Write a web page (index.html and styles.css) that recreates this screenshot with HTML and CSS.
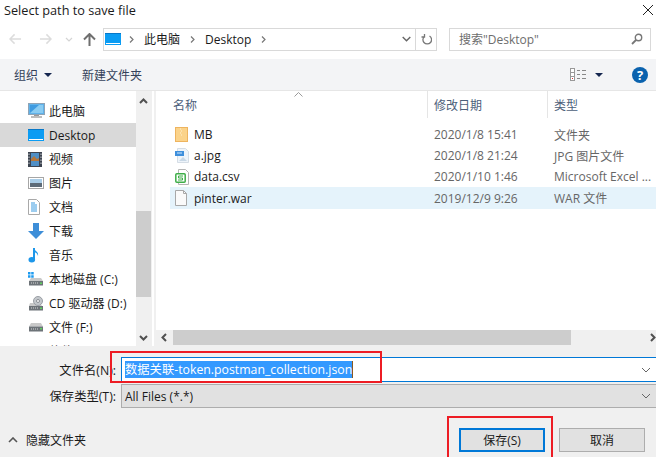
FILE: index.html
```html
<!DOCTYPE html>
<html lang="zh-CN">
<head>
    <meta charset="UTF-8" />
    <title>Select path to save file</title>
    <link rel="stylesheet" href="styles.css">
</head>
<body>
<div class="dialog">
    <div class="title-bar">
        <span>Select path to save file</span>
        <svg class="close" width="12" height="12" viewBox="0 0 12 12"><path d="M1 1l10 10M11 1L1 11" stroke="#222" fill="none"/></svg>
    </div>

    <div class="nav-row">
        <svg class="nav-icon back" width="13" height="12" viewBox="0 0 14 12"><path d="M6 1L1 6l5 5M1 6h12" stroke="#dcdcdc" stroke-width="1.6" fill="none"/></svg>
        <svg class="nav-icon forward" width="13" height="12" viewBox="0 0 14 12"><path d="M8 1l5 5-5 5M13 6H1" stroke="#dcdcdc" stroke-width="1.6" fill="none"/></svg>
        <svg class="nav-icon recent" width="8" height="5" viewBox="0 0 8 5"><path d="M1 1l3 3 3-3" stroke="#d4d4d4" stroke-width="1.2" fill="none"/></svg>
        <svg class="nav-icon up" width="13" height="13" viewBox="0 0 13 13"><path d="M1 6.500l5.500-5.500 5.500 5.500M6.500 1.500V13" stroke="#6f6f6f" stroke-width="2" fill="none"/></svg>
        <div class="address">
            <svg class="pc-icon" width="16" height="12" viewBox="0 0 16 12"><rect width="16" height="12" fill="#0b9cf3"/><path d="M1 10.500h14" stroke="#fff"/><rect x="0" y="0" width="16" height="1" fill="#0878c8"/></svg>
            <svg class="crumb" width="5" height="7" viewBox="0 0 5 7"><path d="M1 .5l3 3-3 3" stroke="#777" stroke-width="1.200" fill="none"/></svg>
            <span>此电脑</span>
            <svg class="crumb" width="5" height="7" viewBox="0 0 5 7"><path d="M1 .5l3 3-3 3" stroke="#777" stroke-width="1.200" fill="none"/></svg>
            <span>Desktop</span>
            <svg class="crumb" width="5" height="7" viewBox="0 0 5 7"><path d="M1 .5l3 3-3 3" stroke="#777" stroke-width="1.200" fill="none"/></svg>
            <svg class="addr-drop" width="9" height="6" viewBox="0 0 9 6"><path d="M.7 1l3.800 3.800L8.300 1" stroke="#666" stroke-width="1.400" fill="none"/></svg>
            <div class="refresh">
                <svg width="11" height="12" viewBox="0 0 11 12"><path d="M3.500 2.500a4.300 4.300 0 1 0 4.500 0M3 .5v3h-3" transform="translate(.5 .5)" stroke="#777" stroke-width="1.300" fill="none"/></svg>
            </div>
        </div>
        <div class="search">
            <span>搜索"Desktop"</span>
            <svg width="12" height="12" viewBox="0 0 12 12"><circle cx="7.500" cy="4.500" r="3.200" stroke="#777" stroke-width="1.400" fill="none"/><path d="M5 7l-4 4" stroke="#777" stroke-width="1.800"/></svg>
        </div>
    </div>

    <div class="toolbar">
        <span>组织</span>
        <i class="caret organize-caret"></i>
        <span class="new-folder">新建文件夹</span>
        <svg class="view-icon" width="17" height="13" viewBox="0 0 17 13">
            <rect x=".5" y=".5" width="4" height="12" fill="#fff" stroke="#999"/>
            <path d="M1 4.500h3M1 8.500h3" stroke="#999"/>
            <rect x="2" y="10" width="1" height="1" fill="#d33"/>
            <path d="M7 2.500h3M12 2.500h4M7 6.500h3M12 6.500h4M7 10.500h3M12 10.500h4" stroke="#888"/>
        </svg>
        <i class="caret view-caret"></i>
        <div class="help">?</div>
    </div>

    <div class="main">
        <div class="sidebar">
            <div class="side-item">
                <svg width="17" height="16" viewBox="0 0 17 16"><rect x=".5" y=".5" width="16" height="11" fill="#5fb2ea" stroke="#8fa3b5"/><rect x="2" y="2" width="13" height="8" fill="#3f9be0"/><path d="M2 10l9-8h4v8z" fill="#8accf2"/><rect x="6" y="12" width="5" height="1" fill="#9a9a9a"/><rect x="3" y="13" width="11" height="2" fill="#bdbdbd"/></svg>
                <span>此电脑</span>
            </div>
            <div class="side-item active">
                <svg width="16" height="12" viewBox="0 0 16 12"><rect width="16" height="12" fill="#0b9cf3"/><path d="M1 10.500h14" stroke="#fff"/><rect width="16" height="1" fill="#0878c8"/></svg>
                <span>Desktop</span>
            </div>
            <div class="side-item">
                <svg width="14" height="15" viewBox="0 0 14 15"><rect width="14" height="15" fill="#3d4450"/><rect x="3" y="1" width="8" height="13" fill="#4f8fc6"/><path d="M3 7l3-3 3 3 2-1v3H3z" fill="#b5763a"/><path d="M1 1.500v12M13 1.500v12" stroke="#c9ccd0" stroke-dasharray="1.500 1.500"/></svg>
                <span>视频</span>
            </div>
            <div class="side-item">
                <svg width="16" height="12" viewBox="0 0 16 12"><rect x=".5" y=".5" width="15" height="11" fill="#fff" stroke="#a6a6a6"/><rect x="2" y="2" width="12" height="4" fill="#a9cde8"/><rect x="2" y="6" width="12" height="4" fill="#5d6b78"/></svg>
                <span>图片</span>
            </div>
            <div class="side-item">
                <svg width="12" height="16" viewBox="0 0 12 16"><path d="M.5.500h8l3 3v12H.5z" fill="#fff" stroke="#a9a9a9"/><path d="M3 4h4M3 6h6M3 8h6M3 10h6M3 12h6" stroke="#3a9be0"/></svg>
                <span>文档</span>
            </div>
            <div class="side-item">
                <svg width="16" height="16" viewBox="0 0 16 16"><path d="M5 0h6v8h5l-8 8-8-8h5z" fill="#3d8ed8"/></svg>
                <span>下载</span>
            </div>
            <div class="side-item">
                <svg width="12" height="16" viewBox="0 0 12 16"><path d="M6 1v11" stroke="#1d97ea" stroke-width="2"/><ellipse cx="3.800" cy="12.800" rx="3.300" ry="2.700" fill="#1d97ea"/><path d="M6 1c.5 3 5 3.500 4 8-.5-2.500-2-3.500-4-4z" fill="#1d97ea"/></svg>
                <span>音乐</span>
            </div>
            <div class="side-item">
                <svg width="16" height="14" viewBox="0 0 16 14"><path d="M0 0h2.500v2.500H0zM3.200 0h2.500v2.500H3.200zM0 3.200h2.500v2.500H0zM3.200 3.200h2.500v2.500H3.200z" fill="#1d9bf0"/><path d="M3 6h10l2 3H1z" fill="#c9c9c9"/><rect x="1" y="9" width="14" height="4.500" fill="#6d7378"/><path d="M3 11h7" stroke="#d6d6d6" stroke-dasharray="1 1"/><rect x="12" y="10.500" width="2" height="1.500" fill="#5fd35f"/></svg>
                <span>本地磁盘 (C:)</span>
            </div>
            <div class="side-item">
                <svg width="16" height="15" viewBox="0 0 16 15"><path d="M2 7h10l2 3H1z" fill="#c9c9c9"/><rect x="1" y="10" width="14" height="4.500" fill="#6d7378"/><path d="M3 12h7" stroke="#d6d6d6" stroke-dasharray="1 1"/><rect x="12" y="11.500" width="2" height="1.500" fill="#5fd35f"/><circle cx="10" cy="5" r="4.500" fill="#c4c8cc" stroke="#9a9fa5"/><circle cx="10" cy="5" r="1.500" fill="#fff" stroke="#8a8f95"/></svg>
                <span>CD 驱动器 (D:)</span>
            </div>
            <div class="side-item">
                <svg width="16" height="9" viewBox="0 0 16 9"><path d="M3 0h10l2 3.500H1z" fill="#c9c9c9"/><rect x="1" y="3.500" width="14" height="5" fill="#6d7378"/><path d="M3 6h7" stroke="#d6d6d6" stroke-dasharray="1 1"/><rect x="12" y="5" width="2" height="1.500" fill="#5fd35f"/></svg>
                <span>文件 (F:)</span>
            </div>
            <div class="side-item">
                <svg width="16" height="9" viewBox="0 0 16 9"><rect x="1" y="3.500" width="14" height="5" fill="#6d7378"/></svg>
                <span>软件 (G:)</span>
            </div>
        </div>
        <div class="vscroll">
            <svg class="arrow-top" width="9" height="6" viewBox="0 0 9 6"><path d="M1 5l3.500-3.500L8 5" stroke="#505050" stroke-width="2" fill="none"/></svg>
            <div class="vthumb"></div>
            <svg class="arrow-bottom" width="9" height="6" viewBox="0 0 9 6"><path d="M1 1l3.500 3.500L8 1" stroke="#505050" stroke-width="2" fill="none"/></svg>
        </div>
        <div class="list">
            <div class="list-head">
                <div class="col-name">名称</div>
                <div class="col-date">修改日期</div>
                <div class="col-type">类型</div>
                <svg class="sort" width="9" height="5" viewBox="0 0 9 5"><path d="M.5 4.500l4-4 4 4" stroke="#9a9a9a" fill="none"/></svg>
            </div>
            <div class="rows">
                <div class="row">
                    <div class="file-name">
                        <svg width="13" height="15" viewBox="0 0 13 15"><rect x=".5" y=".5" width="12" height="14" fill="#fbd38a" stroke="#eeb45f"/><path d="M5 2h1M6 4h1M5 6h1M6 8h1" stroke="#fff0d0"/></svg>
                        <span>MB</span>
                    </div>
                    <div class="file-date">2020/1/8 15:41</div>
                    <div class="file-type">文件夹</div>
                </div>
                <div class="row">
                    <div class="file-name">
                        <svg width="14" height="15" viewBox="0 0 14 15"><path d="M2.500.500h8l3 3v11h-11z" fill="#eef4fa" stroke="#d5dde5"/><rect x="0" y="3" width="9" height="5" fill="#3e8fdc"/><path d="M2 5h5" stroke="#cfe6fa"/><path d="M4 13l4-4 4 4z" fill="#c8d8e6"/></svg>
                        <span>a.jpg</span>
                    </div>
                    <div class="file-date">2020/1/8 21:24</div>
                    <div class="file-type">JPG 图片文件</div>
                </div>
                <div class="row">
                    <div class="file-name">
                        <svg width="14" height="16" viewBox="0 0 14 16"><path d="M3.500.500h7l3 3v12h-10z" fill="#fff" stroke="#b5b5b5"/><rect x=".8" y="4.800" width="9.400" height="8.400" rx="1" fill="#fff" stroke="#3fae49" stroke-width="1.500"/><path d="M8 7H3.500v2h4v2H3" stroke="#3fae49" fill="none"/></svg>
                        <span>data.csv</span>
                    </div>
                    <div class="file-date">2020/1/10 1:46</div>
                    <div class="file-type">Microsoft Excel ...</div>
                </div>
                <div class="row selected">
                    <div class="file-name">
                        <svg width="12" height="16" viewBox="0 0 12 16"><path d="M.5.500h8l3 3v12H.5z" fill="#fafafa" stroke="#a8a8a8"/><path d="M8.500.500v3h3" fill="none" stroke="#a8a8a8"/></svg>
                        <span>pinter.war</span>
                    </div>
                    <div class="file-date">2019/12/9 9:26</div>
                    <div class="file-type">WAR 文件</div>
                </div>
            </div>
            <div class="hscroll">
                <svg class="arrow-left" width="6" height="9" viewBox="0 0 6 9"><path d="M5 1L1.500 4.500 5 8" stroke="#505050" stroke-width="2" fill="none"/></svg>
                <div class="hthumb"></div>
                <svg class="arrow-right" width="6" height="9" viewBox="0 0 6 9"><path d="M1 1l3.500 3.500L1 8" stroke="#505050" stroke-width="2" fill="none"/></svg>
            </div>
        </div>
    </div>

    <div class="form">
        <div class="field filename-field">
            <label>文件名(N):</label>
            <div class="filename-box">
                <span class="selection">数据关联-token.postman_collection.json</span>
                <svg width="10" height="6" viewBox="0 0 10 6"><path d="M1 1l4 4 4-4" stroke="#666" fill="none"/></svg>
            </div>
        </div>
        <div class="field type-field">
            <label>保存类型(T):</label>
            <div class="type-box">
                <span>All Files (*.*)</span>
                <svg width="10" height="6" viewBox="0 0 10 6"><path d="M1 1l4 4 4-4" stroke="#666" fill="none"/></svg>
            </div>
        </div>
        <div class="actions">
            <svg class="hide-arrow" width="10" height="6" viewBox="0 0 10 6"><path d="M1 5l4-4 4 4" stroke="#555" stroke-width="1.600" fill="none"/></svg>
            <span class="hide-label">隐藏文件夹</span>
            <button class="btn primary">保存(S)</button>
            <button class="btn">取消</button>
        </div>
    </div>

    <div class="mark mark-filename"></div>
    <div class="mark mark-save"></div>
</div>
</body>
</html>
```

FILE: styles.css
```css
* {
    box-sizing: border-box;
}
html, body {
    margin: 0;
    height: 100%;
}
body {
    font-family: "Open Sans", "Noto Sans CJK SC", sans-serif;
    font-size: 12px;
    color: #1a1a1a;
    background: white;
    overflow: hidden;
}
svg {
    display: block;
    flex: none;
}
.dialog {
    position: relative;
    width: 656px;
    height: 457px;
    overflow: hidden;
}
.title-bar {
    height: 20px;
    padding: 0 2px 0 4px;
    display: flex;
    justify-content: space-between;
    align-items: center;
    font-size: 12.7px;
}
.nav-row {
    height: 39px;
    display: flex;
    align-items: center;
    padding: 0 5px 1px 9px;
}
.forward { margin-left: 17px; }
.recent { margin-left: 13px; }
.up { margin-left: 10px; }
.address {
    width: 334px;
    height: 23px;
    margin-left: 7px;
    border: 1px solid #d9d9d9;
    display: flex;
    align-items: center;
    padding-left: 1px;
}
.address .crumb { margin: 0 10px 0 8px; }
.address span + .crumb { margin-left: 10px; }
.addr-drop { margin-left: auto; margin-right: 4px; }
.refresh {
    width: 21px;
    height: 100%;
    border-left: 1px solid #d9d9d9;
    display: flex;
    align-items: center;
    justify-content: center;
}
.search {
    width: 202px;
    height: 23px;
    margin-left: 12px;
    border: 1px solid #d9d9d9;
    display: flex;
    align-items: center;
    justify-content: space-between;
    padding: 0 7px 0 9px;
    color: #6d6d6d;
}
.toolbar {
    height: 32px;
    background: #f3f4f6;
    border-bottom: 1px solid #e6e6e6;
    display: flex;
    align-items: center;
    padding: 0 8px 0 14px;
    color: #33415a;
}
.caret {
    display: block;
    width: 0;
    height: 0;
    border: 4px solid transparent;
    border-top: 4px solid #15264f;
    border-bottom: 0;
}
.organize-caret { margin-left: 6px; }
.new-folder { margin-left: 30px; }
.view-icon { margin-left: auto; }
.view-caret { margin-left: 8px; }
.help {
    width: 16px;
    height: 16px;
    margin-left: 29px;
    border-radius: 50%;
    background: #0a62ae;
    color: white;
    font-weight: bold;
    font-size: 13px;
    line-height: 16px;
    text-align: center;
}
.main {
    height: 255px;
    display: flex;
}
.sidebar {
    width: 136px;
    overflow: hidden;
    padding-top: 8px;
    flex: none;
}
.side-item {
    height: 24px;
    display: flex;
    align-items: center;
    position: relative;
}
.side-item svg {
    margin-left: 28px;
}
.side-item span {
    position: absolute;
    left: 49px;
    white-space: nowrap;
}
.side-item.active {
    background: #d9d9d9;
}
.vscroll {
    width: 16px;
    margin-right: 2px;
    background: #f0f0f0;
    position: relative;
    flex: none;
}
.arrow-top { position: absolute; left: 3px; top: 7px; }
.arrow-bottom { position: absolute; left: 3px; bottom: 5px; }
.vthumb {
    position: absolute;
    top: 120px;
    left: 0;
    width: 15px;
    height: 86px;
    background: #cdcdcd;
}
.list {
    flex: 1;
    min-width: 0;
    display: flex;
    flex-direction: column;
    border-left: 2px solid #f0f0f0;
}
.list-head {
    height: 27px;
    display: grid;
    grid-template-columns: 271px 120px 1fr;
    color: #4c607a;
    position: relative;
}
.list-head div {
    display: flex;
    align-items: center;
    padding-left: 6px;
}
.col-name { padding-left: 17px !important; }
.col-date, .col-type { border-left: 1px solid #e5e5e5; }
.sort { position: absolute; left: 138px; top: 1px; }
.rows {
    flex: 1;
    padding: 6px 0 0 14px;
}
.row {
    height: 21px;
    display: grid;
    grid-template-columns: 257px 120px 1fr;
    align-items: center;
    color: #666;
}
.row.selected {
    height: 22px;
    background: #e5f3fb;
}
.file-name {
    display: flex;
    align-items: center;
    padding-left: 5px;
    color: #1a1a1a;
}
.file-name span { position: absolute; left: 194px; }
.file-date, .file-type { padding-left: 7px; }
.hscroll {
    height: 16px;
    background: #f0f0f0;
    position: relative;
    flex: none;
}
.arrow-left { position: absolute; left: 5px; top: 3px; }
.arrow-right { position: absolute; right: 0; top: 3px; }
.hthumb {
    position: absolute;
    left: 17px;
    top: 0;
    width: 398px;
    height: 15px;
    background: #cdcdcd;
}
.form {
    height: 111px;
    background: #f0f0f0;
    padding-top: 11px;
}
.field {
    display: flex;
    align-items: center;
}
.field label {
    width: 121px;
    padding-right: 5px;
    text-align: right;
    font-size: 12.3px;
}
.filename-field { height: 25px; }
.type-field { height: 24px; margin-top: 2px; }
.filename-box, .type-box {
    flex: 1;
    height: 100%;
    display: flex;
    align-items: center;
    justify-content: space-between;
    padding: 0 5px 0 3px;
}
.filename-box {
    background: white;
    border-top: 1px solid #0078d7;
    border-bottom: 1px solid #0078d7;
    border-left: 1px solid #0078d7;
}
.selection {
    background: #3399ff;
    color: white;
    font-size: 12.3px;
    line-height: 17px;
    border-right: 1px solid #8a5a20;
}
.type-box {
    background: #e1e1e1;
    border-top: 1px solid #adadad;
    border-bottom: 1px solid #adadad;
    border-left: 1px solid #adadad;
}
.actions {
    display: flex;
    align-items: center;
    margin-top: 20px;
    padding: 0 11px 0 8px;
}
.hide-arrow { margin-right: 8px; }
.btn {
    width: 86px;
    height: 24px;
    font: inherit;
    color: #1a1a1a;
    background: #e1e1e1;
    border: 1px solid #adadad;
    padding: 0;
}
.btn.primary {
    margin-left: auto;
    margin-right: 14px;
    border: 2px solid #0078d7;
}
.mark {
    position: absolute;
    border: 2px solid #ed1c24;
}
.mark-filename {
    left: 110px;
    top: 351px;
    width: 272px;
    height: 32px;
}
.mark-save {
    left: 447px;
    top: 416px;
    width: 106px;
    height: 50px;
}
```
